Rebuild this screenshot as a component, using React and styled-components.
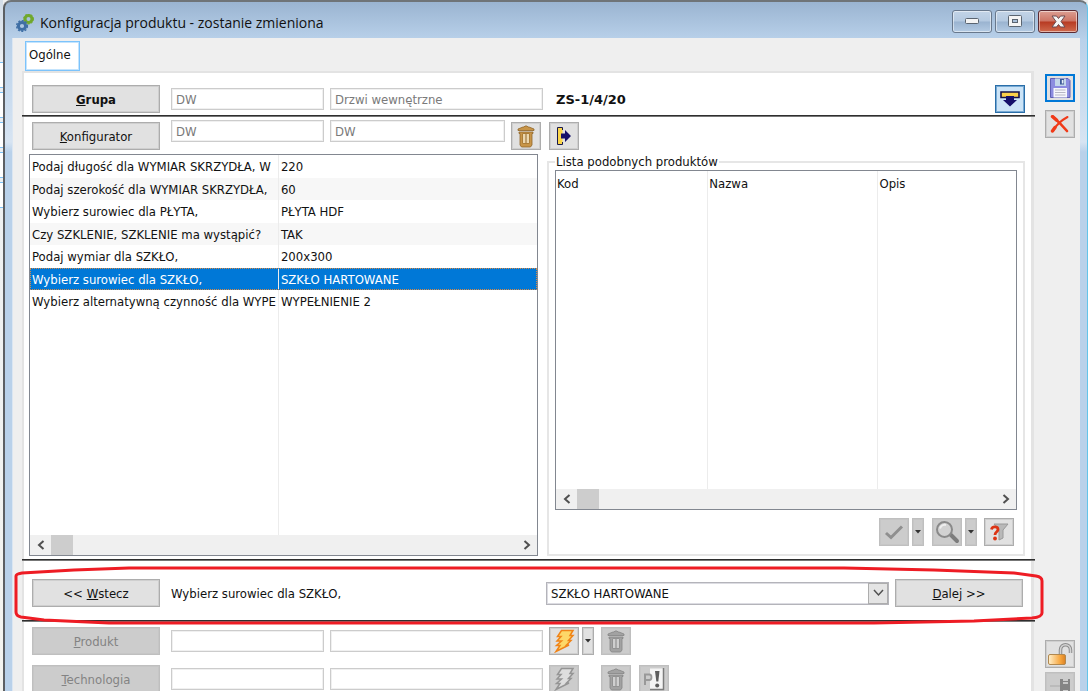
import React from "react";
import styled, { createGlobalStyle, css } from "styled-components";

const GlobalStyle = createGlobalStyle`
  *, *::before, *::after {
    box-sizing: border-box;
  }
  body {
    margin: 0;
    background: #efefef;
    font-family: "DejaVu Sans Condensed", "DejaVu Sans", Tahoma, sans-serif;
    font-size: 13px;
    color: #111;
  }
  button, input, select {
    font: inherit;
    color: inherit;
    margin: 0;
  }
`;

const Desktop = styled.div`
  display: grid;
  grid-template-columns: 3px minmax(0, 1fr);
  grid-template-rows: minmax(0, 1fr);
  height: 100vh;
  overflow: hidden;
`;

const Backdrop = styled.div`
  overflow: hidden;
  padding-top: 62px;
  background: linear-gradient(#d3dde8, #eceff2 60px, #f4f4f0);
`;

const BackdropField = styled.div`
  height: 26px;
  margin-bottom: 4px;
  border-top: 1px solid #7cc0f5;
  border-bottom: 1px solid #7cc0f5;
  background: #fff;
`;

const Window = styled.div`
  position: relative;
  display: flex;
  flex-direction: column;
  min-width: 0;
  border-left: 2px solid #5c5f63;
  border-top: 2px solid #6f7478;
  border-right: 1px solid #62c4ea;
  border-radius: 8px 8px 0 0;
  background: linear-gradient(#9ab4d1, #b9d1ea 38px, #d7e4f2 140px, #b9d1ea 150px);
`;

const TitleBar = styled.header`
  display: flex;
  align-items: center;
  gap: 6px;
  height: 36px;
  flex: none;
  padding: 6px 9px 0 11px;
`;

const Title = styled.h1`
  flex: 1;
  margin: 0;
  font: 400 14px/20px "Open Sans", "Noto Sans", sans-serif;
`;

const WindowButtons = styled.div`
  display: flex;
  gap: 3px;
  margin-top: -4px;
`;

const WindowButton = styled.button`
  display: flex;
  align-items: center;
  justify-content: center;
  width: 40px;
  height: 23px;
  padding: 0;
  border: 1px solid ${(p) => (p.$close ? "#5b2a32" : "#68788c")};
  border-radius: 3px;
  box-shadow: inset 0 0 0 1px rgba(255, 255, 255, 0.5);
  background: ${(p) =>
    p.$close
      ? "linear-gradient(#dc9e92, #cd7464 48%, #b73a22 52%, #cf6a4e)"
      : "linear-gradient(#c3d4e7, #b4c9e0 48%, #9ab3d0 52%, #b4cbe3)"};
`;

const Body = styled.div`
  display: grid;
  grid-template-columns: minmax(0, 1fr) 30px;
  grid-template-rows: minmax(0, 1fr);
  column-gap: 11px;
  flex: 1;
  min-height: 0;
  margin: 0 7px 0 7px;
  padding: 3px 5px 0 9px;
  border-left: 1px solid #dbe6f2;
  background: #efefef;
`;

const Main = styled.main`
  display: flex;
  flex-direction: column;
  min-width: 0;
`;

const Tab = styled.button`
  align-self: flex-start;
  flex: none;
  height: 30px;
  margin-left: 3px;
  padding: 0 8px 4px 3px;
  border: 1px solid #7cc3fb;
  box-shadow: inset 0 0 0 1px #c4e4fd;
  background: #fff;
`;

const Panel = styled.section`
  flex: 1 0 auto;
  border: 2px solid #e3e3e3;
  border-bottom: 0;
  border-right-width: 3px;
  background: #fff;
`;

const Divider = styled.hr`
  height: 2px;
  margin: 0 -4px 0 -2px;
  border: 0;
  border-top: 1px solid #2f2f2f;
  background: #777;
`;

const Cell = styled.div`
  display: flex;
  align-items: center;
  gap: ${(p) => p.$gap || "6px"};
  min-width: 0;
  padding-right: ${(p) => p.$end || "0"};
`;

const FormRow = styled.div`
  display: grid;
  grid-template-columns: 133px 153fr 213fr 476fr;
  column-gap: 6px;
  align-items: center;
  padding: ${(p) => p.$pad || "5px"} 6px ${(p) => p.$padBottom || "5px"} 8px;
  ${(p) =>
    p.$spread &&
    css`
      grid-auto-rows: 30px;
      &, ${Cell} {
        align-items: start;
      }
      ${Cell} {
        align-self: stretch;
      }
      button {
        align-self: end;
      }
    `}
`;

const Button = styled.button`
  width: 128px;
  height: 28px;
  padding: 0;
  border: 1px solid #adadad;
  box-shadow: inset 0 0 0 1px #cfcfcf;
  background: #e1e1e1;
  ${(p) =>
    p.$bold &&
    css`
      font-weight: bold;
    `}
  &:disabled {
    border-color: #bfbfbf;
    box-shadow: inset 0 0 0 1px #c6c6c6;
    background: #cccccc;
    color: #838383;
  }
`;

const IconButton = styled.button`
  display: flex;
  align-items: center;
  justify-content: center;
  flex: none;
  width: ${(p) => (p.$narrow ? "12px" : "30px")};
  height: 28px;
  padding: 0;
  border: 1px solid #adadad;
  box-shadow: inset 0 0 0 1px #cfcfcf;
  background: #e1e1e1;
  &:disabled {
    border-color: #bfbfbf;
    box-shadow: inset 0 0 0 1px #c6c6c6;
    background: #cccccc;
  }
  ${(p) =>
    p.$active &&
    css`
      border-color: #2a6ea8;
      box-shadow: inset 0 0 0 1px #76a9d4;
      background: #cce4f7;
    `}
  ${(p) =>
    p.$focused &&
    css`
      border: 2px solid #0078d7;
      box-shadow: none;
    `}
`;

const TextInput = styled.input`
  width: 100%;
  min-width: 0;
  height: 22px;
  padding: 0 4px;
  border: 1px solid #cccccc;
  box-shadow: inset 0 0 0 1px #f0f0f0;
  border-radius: 0;
  background: #fff;
  color: #7a7a7a;
`;

const ProductCode = styled.strong`
  flex: 1;
  padding-left: 7px;
  font-family: "DejaVu Sans", Tahoma, sans-serif;
`;

const Columns = styled.div`
  display: grid;
  grid-template-columns: 509fr 478fr;
  column-gap: 9px;
  padding: 4px 6px 3px 5px;
`;

const ListBox = styled.div`
  display: flex;
  flex-direction: column;
  min-width: 0;
  border: 1px solid #828790;
  background: #fff;
`;

const Answers = styled.table`
  width: 100%;
  height: 380px;
  table-layout: fixed;
  border-collapse: collapse;
  td {
    padding: 0 0 0 2px;
    overflow: hidden;
    white-space: nowrap;
    text-overflow: clip;
  }
  td:first-child {
    width: 49%;
    border-right: 1px solid #ececec;
  }
`;

const AnswerRow = styled.tr`
  height: 22px;
  &:nth-child(odd) {
    height: 23px;
  }
  &:nth-child(even) {
    background: #f7f7f7;
  }
  ${(p) =>
    p.$selected &&
    css`
      &&& {
        background: #0078d7;
        color: #fff;
        outline: 1px dotted #d98a45;
        outline-offset: -1px;
      }
    `}
`;

const FillerRow = styled.tr`
  && {
    background: none;
  }
`;

const Group = styled.fieldset`
  display: flex;
  flex-direction: column;
  min-width: 0;
  margin: 0;
  padding: 0 6px 7px;
  border: 2px solid #e6e6e6;
`;

const Legend = styled.legend`
  padding: 0 1px;
  line-height: 16px;
`;

const Similar = styled.table`
  width: 100%;
  height: 318px;
  table-layout: fixed;
  border-collapse: collapse;
  th {
    padding: 5px 0 0 1px;
    border-right: 1px solid #ececec;
    text-align: left;
    vertical-align: top;
    font-weight: normal;
  }
  th:last-child {
    border-right: 0;
  }
`;

const ScrollBar = styled.div`
  display: flex;
  height: 20px;
  background: #f0f0f0;
`;

const ScrollArrow = styled.button`
  display: flex;
  align-items: center;
  justify-content: center;
  width: 21px;
  padding: 0;
  border: 0;
  background: none;
  &:last-child {
    margin-left: auto;
  }
`;

const ScrollThumb = styled.div`
  width: 22px;
  background: #cdcdcd;
`;

const GroupActions = styled.div`
  display: flex;
  justify-content: flex-end;
  gap: 3px;
  padding: 8px 3px 0 0;
`;

const Spacer = styled.span`
  width: ${(p) => p.$w};
`;

const Wizard = styled.div`
  display: grid;
  grid-template-columns: 133px 369fr 343fr 128px;
  column-gap: 6px;
  align-items: center;
  padding: 18px 8px 13px 8px;
`;

const Select = styled.select`
  appearance: none;
  width: 100%;
  height: 23px;
  padding: 0 24px 0 4px;
  border: 1px solid #b4b4ba;
  border-radius: 0;
  box-shadow: inset 0 0 0 1px #dcdce2;
  background: #fff;
`;

const SelectWrap = styled.div`
  position: relative;
  min-width: 0;
`;

const SelectArrow = styled.span`
  position: absolute;
  top: 1px;
  right: 1px;
  bottom: 1px;
  display: flex;
  align-items: center;
  justify-content: center;
  width: 20px;
  border: 1px solid #adadad;
  background: #e4e4e4;
  pointer-events: none;
`;

const Side = styled.aside`
  display: flex;
  flex-direction: column;
  gap: 8px;
  padding-top: 33px;
`;

const SideBottom = styled.div`
  display: flex;
  flex-direction: column;
  gap: 4px;
  margin-top: auto;
  margin-bottom: -9px;
`;

const WizardArea = styled.div`
  position: relative;
`;

const Marker = styled.svg`
  position: absolute;
  top: 5px;
  left: -10px;
  width: calc(100% + 23px);
  height: 60px;
  pointer-events: none;
`;

const GearsIcon = () => (
  <svg width="18" height="19" viewBox="0 0 18 19" fill="none">
    <circle cx="12.5" cy="5" r="3.5" stroke="#70a82c" strokeWidth="3" />
    <circle cx="12.5" cy="5" r="5" stroke="#70a82c" strokeDasharray="1.8 1.4" />
    <circle cx="6" cy="12" r="3.6" stroke="#3f6fa5" strokeWidth="3" />
    <circle cx="6" cy="12" r="5.4" stroke="#3f6fa5" strokeWidth="1.4" strokeDasharray="2 1.5" />
  </svg>
);

const MinimizeIcon = () => (
  <svg width="14" height="6" viewBox="0 0 14 6">
    <rect x="0.5" y="0.5" width="13" height="5" rx="1" fill="#f4f4f4" stroke="#5a6470" />
  </svg>
);

const MaximizeIcon = () => (
  <svg width="14" height="12" viewBox="0 0 14 12">
    <rect x="0.5" y="0.5" width="13" height="11" rx="1" fill="#f4f4f4" stroke="#5a6470" />
    <rect x="4.5" y="4.5" width="5" height="3" fill="#a9bfd8" stroke="#5a6470" />
  </svg>
);

const CloseIcon = () => (
  <svg width="15" height="13" viewBox="0 0 15 13">
    <path
      d="M1 1h4.500l2 2.500L9.500 1H14l-4 5.500 4 5.500H9.500l-2-2.500-2 2.500H1l4-5.500z"
      fill="#f4f4f4"
      stroke="#6a4a50"
    />
  </svg>
);

const TrashIcon = ({ main, dark, light }) => (
  <svg width="18" height="23" viewBox="0 0 18 23">
    <path d="M6 2h1l1-1h2l1 1h1l5 2v1.500H1V4z" fill={main} stroke={dark} strokeWidth="0.8" />
    <path d="M2 7h14v1.500H15V20l-1.500 2h-9L3 20V8.500H2z" fill={main} stroke={dark} strokeWidth="0.8" />
    <path d="M5.500 8.500h7v10h-7z" fill={dark} />
    <path d="M6 9h2.500v9H6zM9.500 9H12v9H9.500z" fill={light} />
  </svg>
);

const GoldTrash = () => <TrashIcon main="#c89548" dark="#8f6428" light="#ecd7ae" />;
const GreyTrash = () => <TrashIcon main="#a2a2a2" dark="#858585" light="#cfcfcf" />;

const ExitIcon = () => (
  <svg width="16" height="20" viewBox="0 0 16 20">
    <path d="M1.500 1.500h5v17h-5z" fill="#fbd64a" />
    <path d="M6.500 4V1.500h-5v17h5V16" fill="none" stroke="#1a1a4a" />
    <path d="M5 7.500h4V4l6 6-6 6v-3.500H5z" fill="#15106a" />
  </svg>
);

const DropIcon = () => (
  <svg width="20" height="16" viewBox="0 0 20 16">
    <path d="M1 1h18v5.500H1z" fill="#fbd04a" stroke="#15104a" strokeWidth="1.600" />
    <path d="M6 5h8v4h3l-7 6.500L3 9h3z" fill="#15106a" />
  </svg>
);

const SaveIcon = () => (
  <svg width="22" height="22" viewBox="0 0 22 22">
    <path d="M1.500 1.500h17.500l2 2v17h-19.500z" fill="#8c8ce0" stroke="#6060b4" />
    <path d="M6 1.500h11V9H6z" fill="#c3d6ea" />
    <path d="M11 2h4v5.500h-4z" fill="#3c5a96" />
    <path d="M12.800 3h1.700v3.500h-1.700z" fill="#e8f0fa" />
    <path d="M4.500 11h13.500v9.500H4.500z" fill="#f6f6fc" />
    <path d="M6 13h10.500M6 15.500h10.500M6 18h10.500" stroke="#b6b6c4" />
  </svg>
);

const DeleteIcon = () => (
  <svg width="20" height="18" viewBox="0 0 20 18" fill="none" strokeLinecap="round">
    <path d="M3 2c5 4 9 8 14 14" stroke="#f03a18" strokeWidth="2.600" />
    <path d="M17.500 2C12 5 7 9 3 15.500" stroke="#f03a18" strokeWidth="2" />
    <path d="M2.500 1.500l4 3.500M5 12.500l-2.500 3.500" stroke="#f03a18" strokeWidth="3.400" />
  </svg>
);

const BoltIcon = ({ fill, stroke }) => (
  <svg width="22" height="24" viewBox="0 0 22 24">
    <path
      d="M8.500 1.500H20l-3 5h3l-4.500 5H18l-4.500 4.500H16L3 22.500l4-6H3.500l5-4.500H4l4-4.500H4.500z"
      fill={fill}
      stroke={stroke}
      strokeWidth="1.500"
    />
  </svg>
);

const CaretIcon = () => (
  <svg width="6" height="4" viewBox="0 0 6 4">
    <path d="M0 0h6L3 3.500z" fill="#333" />
  </svg>
);

const CheckIcon = () => (
  <svg width="20" height="16" viewBox="0 0 20 16" fill="none">
    <path d="M2 9l5 4.500L18 2.500" stroke="#8f8f8f" strokeWidth="3" />
  </svg>
);

const SearchIcon = () => (
  <svg width="26" height="24" viewBox="0 0 26 24" fill="none">
    <path d="M16 14l7 7" stroke="#7c7c7c" strokeWidth="4" strokeLinecap="round" />
    <circle cx="10.500" cy="9.500" r="7.500" fill="#d2d2d2" stroke="#8a8a8a" strokeWidth="2" />
    <path d="M6 8.500c1-3 4-4 6-3.500" stroke="#efefef" strokeWidth="2" />
  </svg>
);

const FilterHelpIcon = () => (
  <svg width="20" height="18" viewBox="0 0 20 18" fill="none">
    <path d="M5 1h14l-5 6v8l-4 2V7z" fill="#b9b9b9" stroke="#9a9a9a" />
    <path d="M2.500 6.500C3 3 9 3 9 6.500 9 9 6 8.500 6 12" stroke="#dc3414" strokeWidth="2.800" />
    <circle cx="6" cy="15.500" r="1.900" fill="#dc3414" />
  </svg>
);

const NoteIcon = () => (
  <svg width="22" height="24" viewBox="0 0 22 24" fill="none">
    <path d="M7 1.500h13.500v21H7z" fill="#f4f4f4" />
    <path d="M20.500 1v21.500H7" stroke="#7c7c7c" strokeWidth="1.500" />
    <path d="M2 18V7.500h4.500c2.500 0 2.500 5.500 0 5.500H3" stroke="#999" strokeWidth="2" />
    <path d="M12 4h4.500l-1.200 10.500h-2z" fill="#5c5c5c" />
    <circle cx="14.200" cy="18.500" r="2" fill="#5c5c5c" />
  </svg>
);

const UnlockIcon = () => (
  <svg width="26" height="24" viewBox="0 0 26 24" fill="none">
    <defs>
      <linearGradient id="lock">
        <stop offset="0" stopColor="#fff0cc" />
        <stop offset="0.700" stopColor="#f7a53c" />
        <stop offset="1" stopColor="#d98024" />
      </linearGradient>
    </defs>
    <path d="M13.500 13V8c0-7 10-7 10 0v3" stroke="#8c8c8c" strokeWidth="3.500" />
    <path d="M13.500 13V8c0-7 10-7 10 0v3" stroke="#d4d4d4" strokeWidth="1.500" />
    <rect x="1.500" y="12.500" width="17" height="10" rx="1.500" fill="url(#lock)" stroke="#b08850" />
  </svg>
);

const PinIcon = () => (
  <svg width="24" height="20" viewBox="0 0 24 20" fill="none">
    <path d="M2 10h10" stroke="#aaa" />
    <path d="M12 3h3v2h5V3h2v13h-2v-2h-5v2h-3z" fill="#858585" />
    <path d="M15 7h5" stroke="#c8c8c8" strokeWidth="2" />
  </svg>
);

const Chevron = ({ d, w = 8, h = 10, thin }) => (
  <svg width={w} height={h} viewBox={`0 0 ${w} ${h}`} fill="none">
    <path d={d} stroke="#505050" strokeWidth={thin ? 1.5 : 2} />
  </svg>
);

const answers = [
  ["Podaj długość dla WYMIAR SKRZYDŁA, W", "220"],
  ["Podaj szerokość dla WYMIAR SKRZYDŁA,", "60"],
  ["Wybierz surowiec dla PŁYTA,", "PŁYTA HDF"],
  ["Czy SZKLENIE, SZKLENIE ma wystąpić?", "TAK"],
  ["Podaj wymiar dla SZKŁO,", "200x300"],
  ["Wybierz surowiec dla SZKŁO,", "SZKŁO HARTOWANE"],
  ["Wybierz alternatywną czynność dla WYPE", "WYPEŁNIENIE 2"],
];

const HorizontalScroll = () => (
  <ScrollBar>
    <ScrollArrow aria-label="Przewiń w lewo">
      <Chevron d="M6.500 1L2 5l4.500 4" />
    </ScrollArrow>
    <ScrollThumb />
    <ScrollArrow aria-label="Przewiń w prawo">
      <Chevron d="M1.500 1L6 5 1.500 9" />
    </ScrollArrow>
  </ScrollBar>
);

const App = () => (
  <>
    <GlobalStyle />
    <Desktop>
      <Backdrop>
        <BackdropField />
        <BackdropField />
        <BackdropField />
        <BackdropField />
        <BackdropField />
      </Backdrop>
      <Window>
        <TitleBar>
          <GearsIcon />
          <Title>Konfiguracja produktu - zostanie zmieniona</Title>
          <WindowButtons>
            <WindowButton aria-label="Minimalizuj">
              <MinimizeIcon />
            </WindowButton>
            <WindowButton aria-label="Maksymalizuj">
              <MaximizeIcon />
            </WindowButton>
            <WindowButton $close aria-label="Zamknij">
              <CloseIcon />
            </WindowButton>
          </WindowButtons>
        </TitleBar>
        <Body>
          <Main>
            <Tab>Ogólne</Tab>
            <Panel>
              <FormRow $pad="12px" $padBottom="2px">
                <Button $bold>
                  <u>G</u>rupa
                </Button>
                <TextInput aria-label="Kod grupy" defaultValue="DW" />
                <TextInput aria-label="Nazwa grupy" defaultValue="Drzwi wewnętrzne" />
                <Cell>
                  <ProductCode>ZS-1/4/20</ProductCode>
                  <IconButton $active aria-label="Rozwiń">
                    <DropIcon />
                  </IconButton>
                </Cell>
              </FormRow>
              <Divider />
              <FormRow $spread $pad="3px" $padBottom="0">
                <Button>
                  <u>K</u>onfigurator
                </Button>
                <TextInput aria-label="Kod konfiguratora" defaultValue="DW" />
                <Cell $end="2px">
                  <TextInput aria-label="Nazwa konfiguratora" defaultValue="DW" />
                  <IconButton aria-label="Usuń konfigurator">
                    <GoldTrash />
                  </IconButton>
                </Cell>
                <Cell>
                  <IconButton aria-label="Przejdź">
                    <ExitIcon />
                  </IconButton>
                </Cell>
              </FormRow>
              <Columns>
                <ListBox>
                  <Answers>
                    <tbody>
                      {answers.map(([question, answer], i) => (
                        <AnswerRow key={question} $selected={i === 5}>
                          <td>{question}</td>
                          <td>{answer}</td>
                        </AnswerRow>
                      ))}
                      <FillerRow>
                        <td />
                        <td />
                      </FillerRow>
                    </tbody>
                  </Answers>
                  <HorizontalScroll />
                </ListBox>
                <Group>
                  <Legend>Lista podobnych produktów</Legend>
                  <ListBox>
                    <Similar>
                      <colgroup>
                        <col width="33%" />
                        <col width="37%" />
                        <col width="30%" />
                      </colgroup>
                      <thead>
                        <tr>
                          <th>Kod</th>
                          <th>Nazwa</th>
                          <th>Opis</th>
                        </tr>
                      </thead>
                    </Similar>
                    <HorizontalScroll />
                  </ListBox>
                  <GroupActions>
                    <IconButton disabled aria-label="Zatwierdź">
                      <CheckIcon />
                    </IconButton>
                    <IconButton $narrow disabled aria-label="Opcje zatwierdzania">
                      <CaretIcon />
                    </IconButton>
                    <Spacer $w="2px" />
                    <IconButton disabled aria-label="Szukaj">
                      <SearchIcon />
                    </IconButton>
                    <IconButton $narrow disabled aria-label="Opcje szukania">
                      <CaretIcon />
                    </IconButton>
                    <Spacer $w="1px" />
                    <IconButton aria-label="Filtr">
                      <FilterHelpIcon />
                    </IconButton>
                  </GroupActions>
                </Group>
              </Columns>
              <Divider />
              <WizardArea>
                <Wizard>
                  <Button>
                    &lt;&lt; <u>W</u>stecz
                  </Button>
                  <label htmlFor="material">Wybierz surowiec dla SZKŁO,</label>
                  <SelectWrap>
                    <Select id="material">
                      <option>SZKŁO HARTOWANE</option>
                    </Select>
                    <SelectArrow>
                      <Chevron thin d="M1 1l4.500 5L10 1" w={11} h={8} />
                    </SelectArrow>
                  </SelectWrap>
                  <Button>
                    <u>D</u>alej &gt;&gt;
                  </Button>
                </Wizard>
                <Divider />
                <Marker viewBox="0 0 1030 60" preserveAspectRatio="none" fill="none">
                  <path
                    d="M2 10Q2 8 8 7L60 4 115 2H830L920 4 1000 7 1022 10Q1028 11 1028 15V47Q1028 51 1018 52L960 55 860 57H95L30 54 7 51Q2 50 2 46z"
                    stroke="#ee1c24"
                    strokeWidth="3"
                  />
                </Marker>
              </WizardArea>
              <FormRow>
                <Button disabled>
                  <u>P</u>rodukt
                </Button>
                <TextInput aria-label="Kod produktu" />
                <TextInput aria-label="Nazwa produktu" />
                <Cell $gap="3px">
                  <IconButton aria-label="Generuj produkt">
                    <BoltIcon fill="#fdd868" stroke="#f08418" />
                  </IconButton>
                  <IconButton $narrow aria-label="Opcje generowania">
                    <CaretIcon />
                  </IconButton>
                  <Spacer $w="1px" />
                  <IconButton disabled aria-label="Usuń produkt">
                    <GreyTrash />
                  </IconButton>
                </Cell>
              </FormRow>
              <FormRow>
                <Button disabled>
                  <u>T</u>echnologia
                </Button>
                <TextInput aria-label="Kod technologii" />
                <TextInput aria-label="Nazwa technologii" />
                <Cell $gap="8px">
                  <IconButton disabled aria-label="Generuj technologię">
                    <BoltIcon fill="#dedede" stroke="#959595" />
                  </IconButton>
                  <Spacer $w="6px" />
                  <IconButton disabled aria-label="Usuń technologię">
                    <GreyTrash />
                  </IconButton>
                  <IconButton disabled aria-label="Uwagi">
                    <NoteIcon />
                  </IconButton>
                </Cell>
              </FormRow>
            </Panel>
          </Main>
          <Side>
            <IconButton $focused aria-label="Zapisz">
              <SaveIcon />
            </IconButton>
            <IconButton aria-label="Anuluj">
              <DeleteIcon />
            </IconButton>
            <SideBottom>
              <IconButton aria-label="Odblokuj">
                <UnlockIcon />
              </IconButton>
              <IconButton disabled aria-label="Przypnij">
                <PinIcon />
              </IconButton>
            </SideBottom>
          </Side>
        </Body>
      </Window>
    </Desktop>
  </>
);

export default App;
